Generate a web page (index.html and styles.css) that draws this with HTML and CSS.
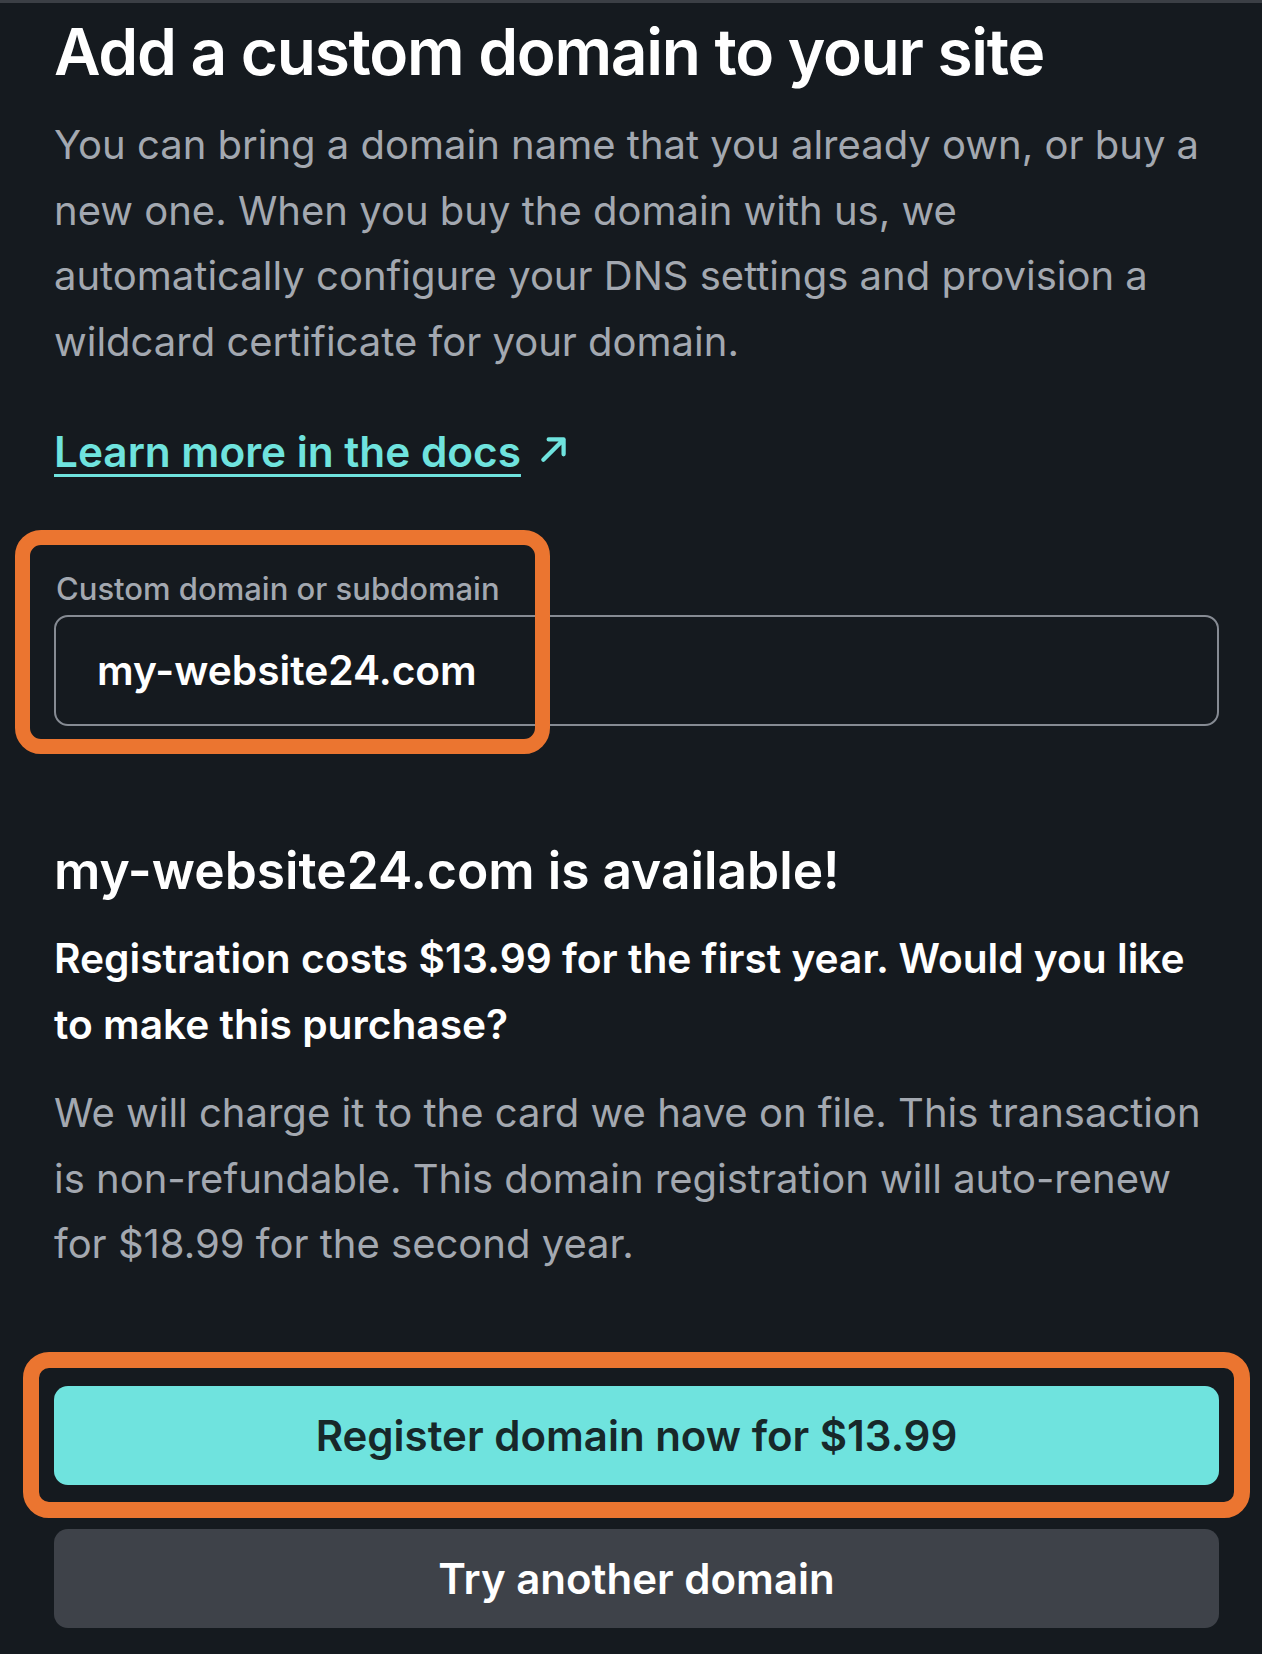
FILE: index.html
```html
<!DOCTYPE html>
<html lang="en">
<head>
<meta charset="utf-8">
<title>Add a custom domain</title>
<link rel="stylesheet" href="styles.css">
</head>
<body>
<div class="topbar"></div>
<main class="page">
  <h1 class="title">Add a custom domain to your site</h1>
  <p class="intro">You can bring a domain name that you already own, or buy a new one. When you buy the domain with us, we automatically configure your DNS settings and provision a wildcard certificate for your domain.</p>
  <p class="docs"><a class="docs-link" href="#">Learn more in the docs</a><svg class="docs-arrow" viewBox="0 0 30 28" width="32" height="30" aria-hidden="true"><path d="M5 24 L24 5 M10 5 H24 V19" fill="none" stroke="#6fe3de" stroke-width="4" stroke-linecap="round" stroke-linejoin="round"/></svg></p>
  <div class="field">
    <label class="field-label" for="domain">Custom domain or subdomain</label>
    <div class="field-input" id="domain">my-website24.com</div>
    <span class="highlight highlight-field"></span>
  </div>
  <h2 class="available">my-website24.com is available!</h2>
  <p class="cost">Registration costs $13.99 for the first year. Would you like to make this purchase?</p>
  <p class="note">We will charge it to the card we have on file. This transaction is non-refundable. This domain registration will auto-renew for $18.99 for the second year.</p>
  <div class="actions">
    <button class="btn btn-primary" type="button">Register domain now for $13.99</button>
    <button class="btn btn-secondary" type="button">Try another domain</button>
    <span class="highlight highlight-btn"></span>
  </div>
</main>
</body>
</html>
```
FILE: styles.css
```css
* { box-sizing: border-box; }
html, body { margin: 0; padding: 0; }
body {
  background: #151a1f;
  font-family: "Inter", "Noto Sans", sans-serif;
  color: #ffffff;
  width: 1262px;
  height: 1654px;
  overflow: hidden;
}
.topbar { height: 3px; background: #3b3f45; }
.page { padding: 0 43px 0 54px; }
.title {
  margin: 11px 0 0;
  font-size: 64px;
  line-height: 76px;
  font-weight: 600;
  letter-spacing: -0.02em;
}
.intro {
  margin: 22px 0 0;
  max-width: 1155px;
  font-size: 40px;
  line-height: 65.5px;
  color: #a3a8b0;
  font-weight: 400;
}
.docs {
  margin: 45px 0 0;
  font-size: 42.3px;
  line-height: 66px;
  display: flex;
  align-items: center;
  gap: 17px;
}
.docs-link {
  color: #6fe3de;
  font-weight: 600;
  text-decoration: underline;
  text-decoration-thickness: 3px;
  text-underline-offset: 7px;
}
.docs-arrow { margin-top: -6px; }
.field { position: relative; margin-top: 84px; }
.field-label {
  display: block;
  font-size: 31px;
  line-height: 40px;
  font-weight: 500;
  color: #a3a8b0;
  padding-left: 2px;
}
.field-input {
  margin-top: 6px;
  height: 111px;
  border: 2px solid #868b93;
  border-radius: 14px;
  padding-left: 41px;
  display: flex;
  align-items: center;
  font-size: 40.7px;
  font-weight: 600;
  color: #ffffff;
}
.highlight {
  position: absolute;
  border: 15px solid #eb7530;
  border-radius: 26px;
  pointer-events: none;
}
.highlight-field { left: -39px; top: -39px; width: 535px; height: 224px; }
.available {
  margin: 109px 0 0;
  font-size: 51.5px;
  line-height: 70px;
  font-weight: 600;
}
.cost {
  margin: 21px 0 0;
  max-width: 1145px;
  font-size: 40.7px;
  line-height: 65.5px;
  font-weight: 600;
}
.note {
  margin: 23px 0 0;
  font-size: 40px;
  line-height: 65.5px;
  color: #a3a8b0;
}
.actions {
  position: relative;
  margin-top: 109px;
  display: flex;
  flex-direction: column;
  gap: 44px;
}
.btn {
  height: 99px;
  border: 0;
  border-radius: 14px;
  font-family: inherit;
  font-size: 42px;
  font-weight: 600;
  width: 100%;
}
.btn-primary { background: #6fe3de; color: #17282a; }
.btn-secondary { background: #3e4249; color: #ffffff; }
.highlight-btn { left: -31px; top: -34px; width: 1227px; height: 166px; border-width: 16px; }
```
